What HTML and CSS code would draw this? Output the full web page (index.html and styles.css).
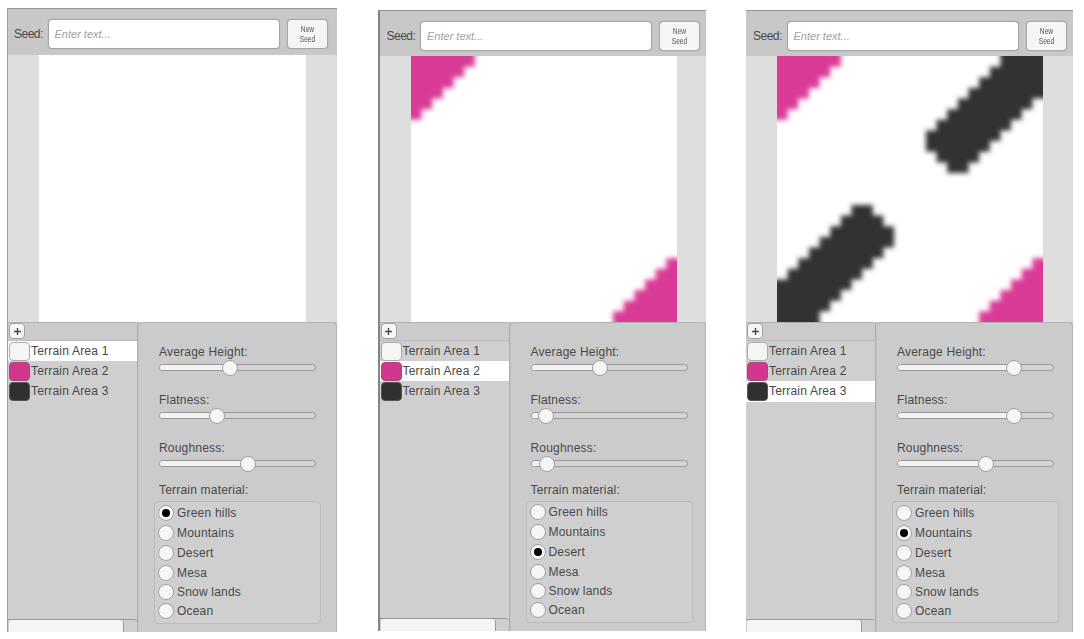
FILE: index.html
```
<!DOCTYPE html>
<html lang="en">
<head>
<meta charset="utf-8">
<title>Terrain Editor</title>
<link rel="stylesheet" href="styles.css">
</head>
<body>
<svg class="defs" aria-hidden="true">
  <defs>
    <filter id="soft" x="-20%" y="-20%" width="140%" height="140%"><feGaussianBlur stdDeviation="0.26"/></filter>
    <path id="corner" d="M-2 -2H6V1H5V2H4V3H3V4H2V5H1V6H-2Z"/>
    <path id="ridge" d="M27 -2H21V1H20V2H19V3H18V4H17V5H16V6H15V7H14V9H15V10H16V11H18V10H19V9H20V8H21V7H22V6H23V5H24V4H27Z"/>
    <path id="plus" d="M1 4.5H8M4.5 1V8"/>
  </defs>
</svg>
<main class="page">

  <section class="editor editor-a">
    <header class="seedbar">
      <span class="seed-label">Seed:</span>
      <div class="seed-input">Enter text...</div>
      <button class="seed-button"><span class="narrow">New<br>Seed</span></button>
    </header>
    <div class="map"><svg class="terrain" viewBox="0 0 25 25"></svg></div>
    <div class="lower">
      <aside class="areas">
        <div class="areas-head"><button class="add"><svg viewBox="0 0 9 9"><use href="#plus"/></svg></button></div>
        <ul class="area-list">
          <li class="area selected"><i class="swatch white"></i>Terrain Area 1</li>
          <li class="area"><i class="swatch pink"></i>Terrain Area 2</li>
          <li class="area"><i class="swatch dark"></i>Terrain Area 3</li>
        </ul>
        <div class="scroll"><div class="thumb"></div></div>
      </aside>
      <div class="settings">
        <div class="field"><label>Average Height:</label><div class="slider"><div class="fill" style="width:71px"></div><i class="knob"></i></div></div>
        <div class="field"><label>Flatness:</label><div class="slider"><div class="fill" style="width:57.5px"></div><i class="knob"></i></div></div>
        <div class="field"><label>Roughness:</label><div class="slider"><div class="fill" style="width:89px"></div><i class="knob"></i></div></div>
        <div class="material">Terrain material:</div>
        <div class="options">
          <div class="option"><i class="radio on"></i>Green hills</div>
          <div class="option"><i class="radio"></i>Mountains</div>
          <div class="option"><i class="radio"></i>Desert</div>
          <div class="option"><i class="radio"></i>Mesa</div>
          <div class="option"><i class="radio"></i>Snow lands</div>
          <div class="option"><i class="radio"></i>Ocean</div>
        </div>
      </div>
    </div>
  </section>

  <section class="editor editor-b">
    <header class="seedbar">
      <span class="seed-label">Seed:</span>
      <div class="seed-input">Enter text...</div>
      <button class="seed-button"><span class="narrow">New<br>Seed</span></button>
    </header>
    <div class="map">
      <svg class="terrain" viewBox="0 0 25 25">
        <g filter="url(#soft)"><use class="pink-shape" href="#corner"/><use class="pink-shape" href="#corner" transform="rotate(180 12.5 12.5)"/></g>
      </svg>
    </div>
    <div class="lower">
      <aside class="areas">
        <div class="areas-head"><button class="add"><svg viewBox="0 0 9 9"><use href="#plus"/></svg></button></div>
        <ul class="area-list">
          <li class="area"><i class="swatch white"></i>Terrain Area 1</li>
          <li class="area selected"><i class="swatch pink"></i>Terrain Area 2</li>
          <li class="area"><i class="swatch dark"></i>Terrain Area 3</li>
        </ul>
        <div class="scroll"><div class="thumb"></div></div>
      </aside>
      <div class="settings">
        <div class="field"><label>Average Height:</label><div class="slider"><div class="fill" style="width:69.5px"></div><i class="knob"></i></div></div>
        <div class="field"><label>Flatness:</label><div class="slider"><div class="fill" style="width:15px"></div><i class="knob"></i></div></div>
        <div class="field"><label>Roughness:</label><div class="slider"><div class="fill" style="width:16px"></div><i class="knob"></i></div></div>
        <div class="material">Terrain material:</div>
        <div class="options">
          <div class="option"><i class="radio"></i>Green hills</div>
          <div class="option"><i class="radio"></i>Mountains</div>
          <div class="option"><i class="radio on"></i>Desert</div>
          <div class="option"><i class="radio"></i>Mesa</div>
          <div class="option"><i class="radio"></i>Snow lands</div>
          <div class="option"><i class="radio"></i>Ocean</div>
        </div>
      </div>
    </div>
  </section>

  <section class="editor editor-c">
    <header class="seedbar">
      <span class="seed-label">Seed:</span>
      <div class="seed-input">Enter text...</div>
      <button class="seed-button"><span class="narrow">New<br>Seed</span></button>
    </header>
    <div class="map">
      <svg class="terrain" viewBox="0 0 25 25">
        <g filter="url(#soft)">
          <use class="pink-shape" href="#corner"/><use class="pink-shape" href="#corner" transform="rotate(180 12.5 12.5)"/>
          <use class="dark-shape" href="#ridge"/><use class="dark-shape" href="#ridge" transform="rotate(180 12.5 12.5)"/>
        </g>
      </svg>
    </div>
    <div class="lower">
      <aside class="areas">
        <div class="areas-head"><button class="add"><svg viewBox="0 0 9 9"><use href="#plus"/></svg></button></div>
        <ul class="area-list">
          <li class="area"><i class="swatch white"></i>Terrain Area 1</li>
          <li class="area"><i class="swatch pink"></i>Terrain Area 2</li>
          <li class="area selected"><i class="swatch dark"></i>Terrain Area 3</li>
        </ul>
        <div class="scroll"><div class="thumb"></div></div>
      </aside>
      <div class="settings">
        <div class="field"><label>Average Height:</label><div class="slider"><div class="fill" style="width:117px"></div><i class="knob"></i></div></div>
        <div class="field"><label>Flatness:</label><div class="slider"><div class="fill" style="width:117px"></div><i class="knob"></i></div></div>
        <div class="field"><label>Roughness:</label><div class="slider"><div class="fill" style="width:89px"></div><i class="knob"></i></div></div>
        <div class="material">Terrain material:</div>
        <div class="options">
          <div class="option"><i class="radio"></i>Green hills</div>
          <div class="option"><i class="radio on"></i>Mountains</div>
          <div class="option"><i class="radio"></i>Desert</div>
          <div class="option"><i class="radio"></i>Mesa</div>
          <div class="option"><i class="radio"></i>Snow lands</div>
          <div class="option"><i class="radio"></i>Ocean</div>
        </div>
      </div>
    </div>
  </section>

</main>
</body>
</html>
```
FILE: styles.css
```
* { box-sizing: border-box; }
body {
  margin: 0;
  background: #fff;
  color: #484848;
  font: 12px/14px "Liberation Sans", Arial, sans-serif;
  letter-spacing: 0.2px;
  overflow: hidden;
}
.defs { display: block; width: 0; height: 0; }
.page { display: flex; align-items: flex-start; height: 639px; padding: 8px 0 0 7px; }

.editor {
  display: flex;
  flex-direction: column;
  flex: none;
  background: #dedede;
  border-top: 1px solid #939393;
  border-left: 1px solid #a0a0a0;
}
.editor-a { width: 330px; height: 624px; --head: 46px; --map: 267px; --box: 123px; }
.editor-b { width: 328.5px; height: 621px; margin: 2px 0 0 40.5px; border-left: 2px solid #858585; --head: 45px; --map: 266px; --box: 122px; }
.editor-c { width: 327px; height: 622px; margin: 2px 0 0 40px; border-left: 0; --head: 45px; --map: 266px; --box: 122px; }

.seedbar {
  display: flex;
  align-items: flex-start;
  flex: none;
  height: var(--head);
  padding: 10px 0 0 6px;
  background: #c8c8c8;
}
.seed-label { width: 34.5px; margin-top: 8px; letter-spacing: -0.5px; }
.editor-a .seed-label { width: 33.5px; }
.editor-b .seed-label, .editor-c .seed-label { padding-left: 1px; }
.seed-input {
  width: 232px;
  height: 30px;
  padding: 8px 6px;
  background: #fff;
  border: 1px solid #a4a4a4;
  border-radius: 4px;
  box-shadow: 0 0 1px #999;
  color: #a0a0a0;
  font-size: 11px;
  font-style: italic;
  letter-spacing: 0;
  line-height: 13px;
}
.seed-button {
  width: 41px;
  height: 30px;
  margin-left: 7px;
  padding: 0;
  background: #f5f5f5;
  border: 1px solid #a8a8a8;
  border-radius: 4px;
  box-shadow: 0 0 1px #999;
  color: #555;
  font: 8.5px/10px "Liberation Sans", Arial, sans-serif;
  letter-spacing: 0;
}
.narrow { display: block; transform: scaleX(0.78); }

.map { flex: none; height: var(--map); padding-left: 30.5px; }
.editor-b .map, .editor-c .map { padding-left: 31px; }
.terrain { display: block; width: var(--map); height: var(--map); background: #fff; overflow: hidden; }
.pink-shape { fill: #da3a96; }
.dark-shape { fill: #333; }

.lower { display: flex; flex: 1; min-height: 0; background: #c3c3c3; }
.areas {
  display: flex;
  flex-direction: column;
  width: 130px;
  background: #cfcfcf;
  border-top: 1px solid #b0b0b0;
  border-right: 1px solid #acacac;
  border-radius: 0 4px 0 0;
}
.areas-head { height: 18px; padding-left: 1px; background: #cbcbcb; border-bottom: 1px solid #bababa; }
.add {
  display: flex;
  align-items: center;
  justify-content: center;
  width: 16px;
  height: 16px;
  padding: 0;
  background: #f6f6f6;
  border: 1px solid #a0a0a0;
  border-radius: 4px;
}
.add svg { width: 9px; height: 9px; fill: none; stroke: #484848; stroke-width: 1.4; }
.area-list { flex: 1; margin: 0; padding: 0; list-style: none; }
.area { display: flex; align-items: center; height: 20.2px; padding-left: 1px; }
.selected { background: #fff; }
.swatch { width: 21px; height: 19px; margin-right: 1px; border: 1px solid #aaa; border-radius: 4px; }
.white { background: #f5f5f5; }
.pink { background: #d2378e; border-color: #a04a7c; }
.dark { background: #303030; border-color: #555; }
.scroll { height: 13px; padding-left: 1px; border-top: 1px solid #999; border-radius: 0 3px 0 0; }
.thumb { width: 115px; height: 100%; background: #f5f5f5; border-right: 1px solid #999; border-radius: 3px 3px 0 0; }

.settings {
  flex: 1;
  margin-left: 1px;
  padding: 22px 0 0 20px;
  background: #cbcbcb;
  border: solid #b3b3b3;
  border-width: 1px 1px 0 0;
  border-radius: 4px 4px 0 0;
}
.field { display: flex; flex-direction: column; height: 48px; }
.slider {
  display: flex;
  align-items: center;
  width: 157px;
  height: 7px;
  margin-top: 5px;
  background: #d3d3d3;
  border: 1px solid #999;
  border-radius: 4px;
}
.fill { flex: none; height: 5px; background: #f2f2f2; border-radius: 3px 0 0 3px; }
.knob, .radio {
  flex: none;
  width: 16px;
  height: 16px;
  background: #f6f6f6;
  border: 1px solid #a0a0a0;
  border-radius: 50%;
}
.knob { margin-left: -9px; }
.material { margin-top: -6px; }
.options {
  width: 167px;
  height: var(--box);
  margin: 4px 0 0 -5px;
  padding: 1px 0 0 3px;
  background: #cfcfcf;
  border: 1px solid #bcbcbc;
  border-radius: 4px;
}
.editor-b .options { padding-top: 0; }
.option { display: flex; align-items: center; gap: 3px; height: 20px; }
.option:nth-child(n+4) { height: 19.4px; }
.option:last-child { height: 18px; }
.radio { display: flex; align-items: center; justify-content: center; }
.on::before { content: ""; width: 8px; height: 8px; border-radius: 50%; background: #000; }
```
